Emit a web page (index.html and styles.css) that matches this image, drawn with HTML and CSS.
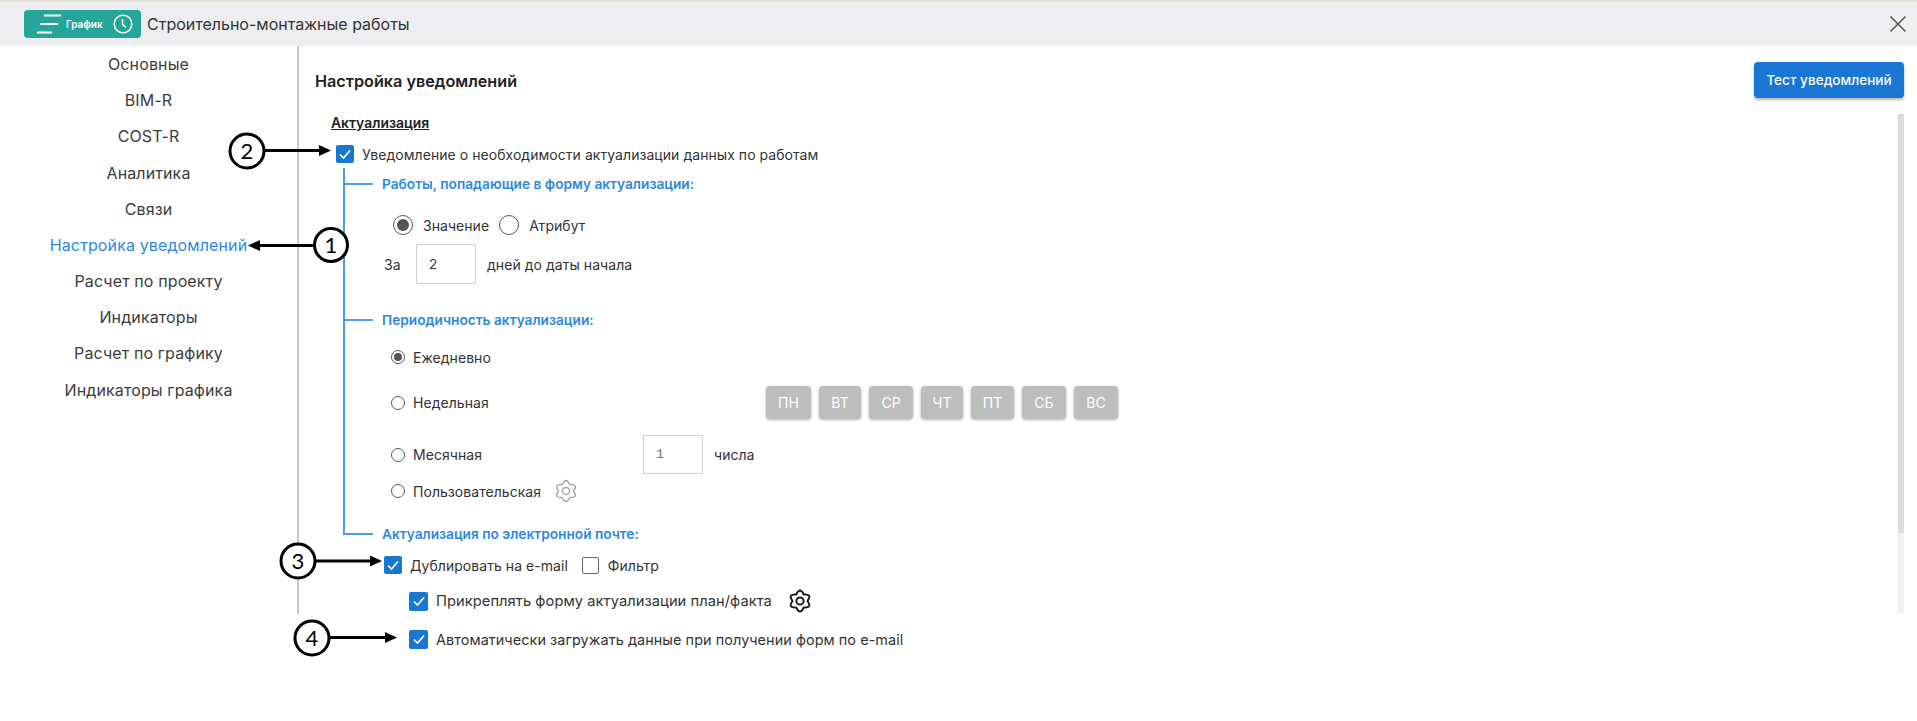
FILE: index.html
```html
<!DOCTYPE html>
<html lang="ru">
<head>
<meta charset="utf-8">
<title>Настройка уведомлений</title>
<link rel="stylesheet" href="styles.css">
</head>
<body>
<div class="app">
  <header class="topbar">
    <div class="chip">
      <svg class="chip-menu" width="26" height="20" viewBox="0 0 26 20"><path d="M8 1.500h17M4 10h18M1 18.500h15" fill="none" stroke="#fff" stroke-width="2"/></svg>
      <span class="chip-text">График</span>
      <svg class="chip-clock" width="20" height="20" viewBox="0 0 20 20"><circle cx="10" cy="10" r="8.800" fill="none" stroke="#fff" stroke-width="1.500"/><path d="M9.500 5v5.500l3.500 3" fill="none" stroke="#fff" stroke-width="1.500"/></svg>
    </div>
    <div class="topbar-title">Строительно-монтажные работы</div>
    <svg class="close" width="18" height="18" viewBox="0 0 18 18"><path d="M1.500 1.500l15 15M16.500 1.500l-15 15" fill="none" stroke="#555" stroke-width="1.500"/></svg>
  </header>
  <div class="body">
    <nav class="side">
      <a class="nav-item">Основные</a>
      <a class="nav-item">BIM-R</a>
      <a class="nav-item">COST-R</a>
      <a class="nav-item">Аналитика</a>
      <a class="nav-item">Связи</a>
      <a class="nav-item nav-active">Настройка уведомлений</a>
      <a class="nav-item">Расчет по проекту</a>
      <a class="nav-item">Индикаторы</a>
      <a class="nav-item">Расчет по графику</a>
      <a class="nav-item">Индикаторы графика</a>
    </nav>
    <main class="main">
      <div class="main-head">
        <h1 class="page-title">Настройка уведомлений</h1>
        <button class="btn-test">Тест уведомлений</button>
      </div>
      <div class="scroll-row">
        <div class="form">
          <div class="section-title">Актуализация</div>
          <div class="row row-master">
            <span class="cb"><svg viewBox="0 0 18 18"><path d="M4 9.500l3.500 3.500 6.500-7.500"/></svg></span>
            <span class="lbl">Уведомление о необходимости актуализации данных по работам</span>
          </div>
          <div class="tree">
            <div class="branch b1">Работы, попадающие в форму актуализации:</div>
            <div class="row row-kind">
              <span class="radio radio-lg radio-on"></span><span class="lbl kind-lbl">Значение</span>
              <span class="radio radio-lg"></span><span class="lbl kind-lbl">Атрибут</span>
            </div>
            <div class="row row-days">
              <span class="lbl za">За</span>
              <span class="field">2</span>
              <span class="lbl">дней до даты начала</span>
            </div>
            <div class="branch b2">Периодичность актуализации:</div>
            <div class="row row-p1"><span class="radio radio-on"></span><span class="lbl">Ежедневно</span></div>
            <div class="row row-p2">
              <div class="pcol pcol-week"><span class="radio"></span><span class="lbl">Недельная</span></div>
              <div class="days">
                <span class="day">ПН</span><span class="day">ВТ</span><span class="day">СР</span><span class="day">ЧТ</span><span class="day">ПТ</span><span class="day">СБ</span><span class="day">ВС</span>
              </div>
            </div>
            <div class="row row-p3">
              <div class="pcol pcol-month"><span class="radio"></span><span class="lbl">Месячная</span></div>
              <span class="field field-mono">1</span>
              <span class="lbl">числа</span>
            </div>
            <div class="row row-p4">
              <span class="radio"></span><span class="lbl">Пользовательская</span>
              <svg class="gear gear-off" width="24" height="24" viewBox="0 0 24 24"><path d="M8.250 5.500Q12-2.500 15.750 5.500Q24.560 4.750 19.500 12Q24.560 19.250 15.750 18.500Q12 26.500 8.250 18.500Q-.56 19.250 4.500 12Q-.56 4.750 8.250 5.500Z"/><circle cx="12" cy="12" r="3.600"/></svg>
            </div>
            <div class="branch b3">Актуализация по электронной почте:</div>
            <div class="row row-mail">
              <span class="cb"><svg viewBox="0 0 18 18"><path d="M4 9.500l3.500 3.500 6.500-7.500"/></svg></span>
              <span class="lbl mail-lbl">Дублировать на e-mail</span>
              <span class="cb cb-off"></span>
              <span class="lbl">Фильтр</span>
            </div>
            <div class="row row-attach">
              <span class="cb cb-lg"><svg viewBox="0 0 18 18"><path d="M4 9.500l3.500 3.500 6.500-7.500"/></svg></span>
              <span class="lbl attach-lbl">Прикреплять форму актуализации план/факта</span>
              <svg class="gear gear-on" width="24" height="24" viewBox="0 0 24 24"><path d="M8.250 5.500Q12-2.500 15.750 5.500Q24.560 4.750 19.500 12Q24.560 19.250 15.750 18.500Q12 26.500 8.250 18.500Q-.56 19.250 4.500 12Q-.56 4.750 8.250 5.500Z"/><circle cx="12" cy="12" r="3.600"/></svg>
            </div>
            <div class="row row-auto">
              <span class="cb cb-lg"><svg viewBox="0 0 18 18"><path d="M4 9.500l3.500 3.500 6.500-7.500"/></svg></span>
              <span class="lbl attach-lbl">Автоматически загружать данные при получении форм по e-mail</span>
            </div>
          </div>
        </div>
        <div class="scrollbar"><div class="thumb"></div></div>
      </div>
    </main>
  </div>
</div>
<svg class="callouts" width="1917" height="721" viewBox="0 0 1917 721">
  <g class="call">
    <circle cx="331" cy="245" r="16.500"/><text x="331" y="253">1</text>
    <path d="M314 245.500H256"/><path class="head" d="M248 245.500l12-5.500v11z"/>
    <circle cx="247" cy="151" r="17"/><text x="247" y="159">2</text>
    <path d="M264 150.500H322"/><path class="head" d="M331 150.500l-12-5.500v11z"/>
    <circle cx="298" cy="561" r="17"/><text x="298" y="569">3</text>
    <path d="M315 561H374"/><path class="head" d="M382 561l-12-5.500v11z"/>
    <circle cx="312" cy="638" r="17"/><text x="312" y="646">4</text>
    <path d="M329 637.500H389"/><path class="head" d="M397 637.500l-12-5.500v11z"/>
  </g>
</svg>
</body>
</html>
```

FILE: styles.css
```css
* { box-sizing: border-box; }
html, body { margin: 0; padding: 0; }
body { width: 1917px; height: 721px; overflow: hidden; background: #fff; font-family: Inter, "Liberation Sans", sans-serif; color: #333; position: relative; }

.app { display: flex; flex-direction: column; height: 721px; }

.topbar { flex: none; height: 46px; border-top: 2px solid #e4e5d9; background: #eeeef0; display: flex; align-items: center; padding-left: 24px; padding-right: 10px; }
.chip { width: 117px; height: 28px; background: #26a69a; border-radius: 4px; display: flex; align-items: center; padding-left: 12px; color: #fff; }
.chip-menu { flex: none; }
.chip-text { font-size: 10px; font-weight: 600; margin-left: 4px; width: 46px; }
.chip-clock { flex: none; margin-left: 1px; }
.topbar-title { margin-left: 6px; font-size: 16px; flex: 1; white-space: nowrap; }
.close { flex: none; }

.body { flex: none; display: flex; height: 568px; }
.side { flex: none; width: 299px; border-right: 2px solid #c8c8c8; display: flex; flex-direction: column; }
.nav-item { height: 36.180px; flex: none; display: flex; align-items: center; justify-content: center; font-size: 16px; letter-spacing: .12px; color: #3c3c3c; white-space: nowrap; }
.nav-active { color: #2f88e0; }

.main { flex: 1; min-width: 0; display: flex; flex-direction: column; padding: 16px 13px 0 16px; }
.main-head { flex: none; height: 36px; display: flex; align-items: center; justify-content: space-between; }
.page-title { margin: 0; padding-top: 1px; font-size: 16.200px; font-weight: 600; color: #222; }
.btn-test { width: 150px; height: 36px; border: 0; border-radius: 4px; background: #1976d2; color: #fff; font: 500 13.600px Inter, "Liberation Sans", sans-serif; box-shadow: 0 2px 3px rgba(0,0,0,.3); padding: 0; }

.scroll-row { flex: none; height: 500px; margin-top: 16px; display: flex; justify-content: space-between; }
.form { padding-left: 16px; }
.scrollbar { flex: none; width: 6px; height: 500px; background: #f1f1f3; }
.thumb { height: 419px; background: #dcdcdc; }

.section-title { height: 18px; line-height: 18px; font-size: 13.900px; font-weight: 600; text-decoration: underline; color: #222; }
.row { display: flex; align-items: center; white-space: nowrap; }
.lbl { font-size: 14px; letter-spacing: .05px; color: #333; }
.row-master { height: 20px; margin-top: 12px; padding-left: 5px; }
.row-master .lbl { margin-left: 8px; }

.cb { flex: none; width: 18px; height: 18px; border-radius: 2px; background: #1976d2; display: flex; align-items: center; justify-content: center; }
.cb svg { width: 18px; height: 18px; fill: none; stroke: #fff; stroke-width: 1.700; }
.cb-lg { width: 19px; height: 19px; }
.cb-off { background: #fff; border: 1.500px solid #666; width: 17px; height: 17px; }

.tree { position: relative; margin-top: 4px; margin-left: 12px; padding-left: 39px; padding-top: 6px; }
.tree::before { content: ""; position: absolute; left: 0; top: 0; width: 1.500px; height: 366px; background: #4f9be6; }
.branch { position: relative; height: 20px; line-height: 20px; font-size: 13.700px; font-weight: 600; color: #2f88e0; white-space: nowrap; }
.branch::before { content: ""; position: absolute; left: -39px; top: 9px; width: 30px; height: 1.500px; background: #4f9be6; }

.radio { flex: none; width: 14px; height: 14px; border: 1.500px solid #555; border-radius: 50%; background: #fff; position: relative; display: inline-block; }
.radio-on::after { content: ""; position: absolute; left: 50%; top: 50%; width: 8px; height: 8px; margin: -4px 0 0 -4px; border-radius: 50%; background: #555; }
.radio-lg { width: 20px; height: 20px; }
.radio-lg.radio-on::after { width: 12px; height: 12px; margin: -6px 0 0 -6px; }

.row-kind { height: 24px; margin-top: 19px; padding-left: 11px; }
.kind-lbl { margin-left: 10px; margin-right: 10px; }
.row-days { height: 40px; margin-top: 7px; padding-left: 2px; }
.za { width: 32px; }
.field { flex: none; width: 60px; height: 100%; border: 1.500px solid #cfcfcf; display: flex; align-items: center; padding-left: 12px; font-size: 13.500px; color: #333; margin-right: 11px; }
.field-mono { font-family: "Liberation Mono", monospace; color: #777; }

.branch.b2 { margin-top: 26px; }
.row-p1 { height: 20px; margin-top: 17px; padding-left: 9px; }
.row-p1 .lbl, .pcol .lbl, .row-p4 .lbl { margin-left: 8px; }
.row-p2 { height: 33px; margin-top: 19px; padding-left: 9px; }
.pcol { display: flex; align-items: center; }
.pcol-week { width: 375px; }
.pcol-month { width: 252px; }
.days { display: flex; gap: 8px; }
.day { width: 44px; height: 33px; display: flex; align-items: center; justify-content: center; background: #bdbdbd; border-radius: 4px; color: #fff; font-size: 14px; box-shadow: 0 1px 3px rgba(0,0,0,.3); }
.day:nth-child(1) { width: 45px; }
.day:nth-child(2), .day:nth-child(4) { width: 42px; }
.day:nth-child(5) { width: 43px; }
.row-p3 { height: 39px; margin-top: 16px; padding-left: 9px; }
.row-p4 { height: 24px; margin-top: 5px; padding-left: 9px; }

.gear { flex: none; fill: none; stroke-linejoin: round; }
.gear-on { margin-left: 16px; stroke: #1c1c1c; stroke-width: 2; }
.gear-off { margin-left: 13px; stroke: #a8a8a8; stroke-width: 1.500; }

.branch.b3 { margin-top: 21px; }
.row-mail { height: 20px; margin-top: 11px; padding-left: 2px; }
.mail-lbl { margin-left: 8px; margin-right: 14px; }
.cb-off + .lbl { margin-left: 9px; }
.row-attach { height: 24px; margin-top: 14px; padding-left: 27px; }
.row-auto { height: 20px; margin-top: 16px; padding-left: 27px; }
.attach-lbl { margin-left: 8px; font-size: 14.700px; }
.row-auto .attach-lbl { font-size: 14.450px; }

.callouts { position: absolute; left: 0; top: 0; pointer-events: none; }
.call circle { fill: #fff; stroke: #000; stroke-width: 3; }
.call path { fill: none; stroke: #000; stroke-width: 3; }
.call path.head { fill: #000; stroke: none; }
.call text { font-family: Lato, "Liberation Sans", sans-serif; font-size: 22px; text-anchor: middle; fill: #000; }
```
